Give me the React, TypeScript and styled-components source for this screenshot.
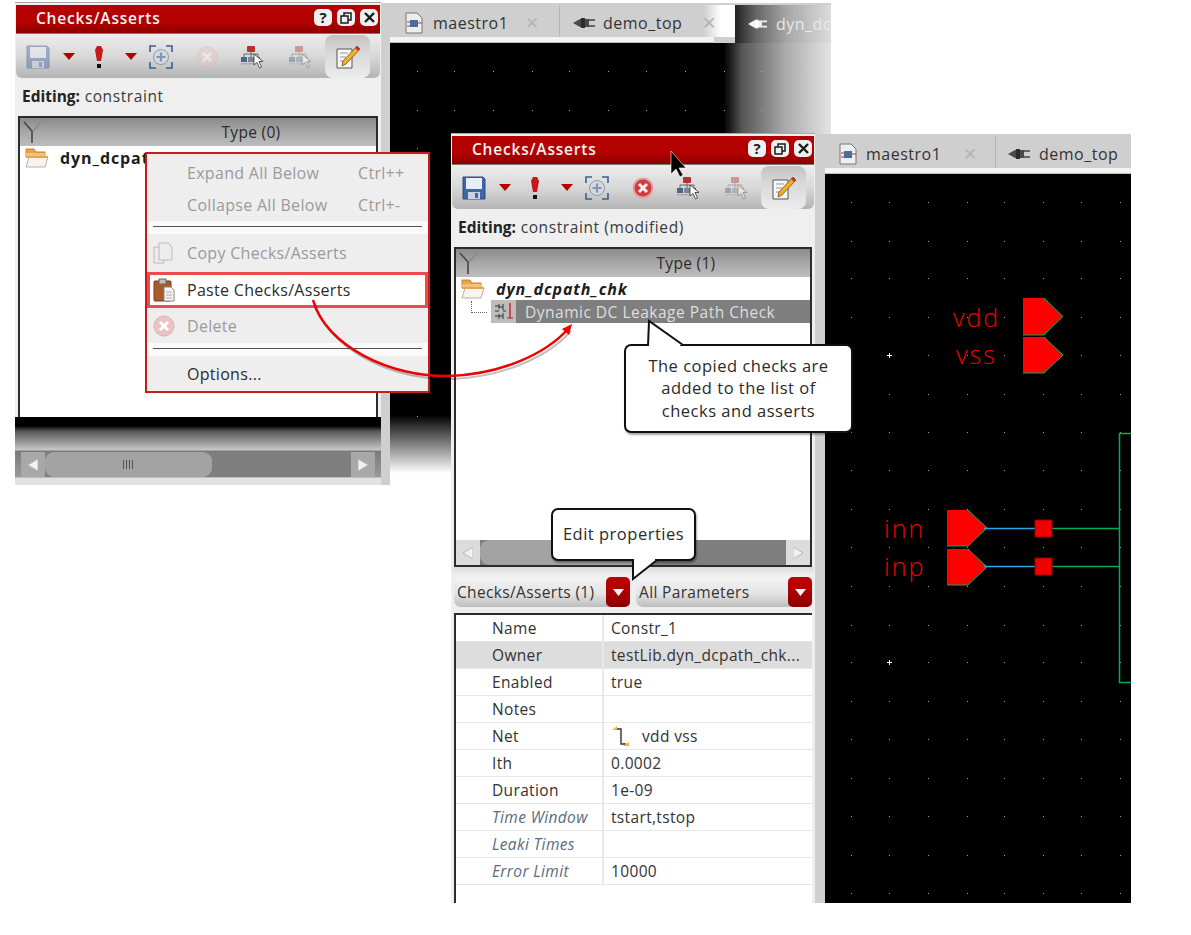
import React from 'react';
import styled, { createGlobalStyle } from 'styled-components';

const GlobalStyle = createGlobalStyle`
  html, body { margin: 0; padding: 0; background: #fff; }
  body { font-family: "Open Sans", "Noto Sans", sans-serif; color: #2a2a2a; }
`;

const dither = (a: string, b: string) => `repeating-conic-gradient(${a} 0 25%, ${b} 0 50%) 0 0 / 2px 2px`;

const Page = styled.div`
  position: relative;
  width: 1191px;
  height: 935px;
  overflow: hidden;
  background: #fff;
`;

/* windows on the desktop */
const Panel = styled.section<{ $left: number; $top: number; $width: number; $height: number }>`
  position: absolute;
  left: ${({ $left }) => $left}px;
  top: ${({ $top }) => $top}px;
  width: ${({ $width }) => $width}px;
  height: ${({ $height }) => $height}px;
  box-sizing: border-box;
  display: flex;
  flex-direction: column;
  padding: 2px 1px 0;
  background: ${dither('#ececec', '#f2f2f2')};
  border-top: 1px solid #a8a8a8;
`;

const Workspace = styled.section<{ $left: number; $top: number; $width: number; $height: number; $inset: number }>`
  position: absolute;
  left: ${({ $left }) => $left}px;
  top: ${({ $top }) => $top}px;
  width: ${({ $width }) => $width}px;
  height: ${({ $height }) => $height}px;
  box-sizing: border-box;
  display: flex;
  flex-direction: column;
  padding: 2px 0 0 ${({ $inset }) => $inset}px;
  background: #cfcfcf;
  overflow: hidden;
`;

const TabBar = styled.div<{ $shift: number }>`
  display: flex;
  height: 32px;
  flex: none;
  margin-left: ${({ $shift }) => $shift}px;
`;

const Tab = styled.div<{ $width: number; $pad: number; $kind?: 'fade' | 'active' }>`
  flex: none;
  box-sizing: border-box;
  width: ${({ $width }) => $width}px;
  height: ${({ $kind }) => ($kind === 'active' ? 38 : 32)}px;
  display: flex;
  align-items: center;
  padding: ${({ $kind }) => ($kind === 'active' ? 0 : 3)}px 0 0 ${({ $pad }) => $pad}px;
  font-size: 16px;
  letter-spacing: 0.5px;
  color: ${({ $kind }) => ($kind === 'active' ? '#e8e8e8' : '#333')};
  white-space: nowrap;
  overflow: hidden;
  border-right: ${({ $kind }) => ($kind ? 'none' : '1px solid #b5b5b5')};
  background: ${({ $kind }) =>
    $kind === 'fade'
      ? 'linear-gradient(to right, #cfcfcf 0, #cfcfcf 82%, #fff 92%)'
      : $kind === 'active'
        ? 'linear-gradient(to right, #222 0, #666 22%, #a8a8a8 55%, #dcdcdc 100%)'
        : '#cfcfcf'};
`;

const TabLabel = styled.span<{ $gap: number; $width?: number }>`
  flex: none;
  margin-left: ${({ $gap }) => $gap}px;
  width: ${({ $width }) => ($width ? `${$width}px` : 'auto')};
`;

const TabClose = styled.span`
  color: #b4b4b4;
  font-size: 17px;
`;

const TabStrip = styled.div<{ $width?: number }>`
  flex: none;
  height: 6px;
  background: #f3f3f3;
  border-bottom: 1px solid #bcbcbc;
  box-sizing: border-box;
  width: ${({ $width }) => ($width ? `${$width}px` : 'auto')};
`;

const Canvas = styled.div<{ $faded?: boolean }>`
  flex: 1;
  min-height: 0;
  background: ${({ $faded }) =>
    $faded
      ? `linear-gradient(to bottom, transparent 0, transparent 372px, #fff 430px),
         linear-gradient(to right, #000 0, #000 334px, #555 352px, #aaa 395px, #e4e4e4 100%)`
      : '#000'};
  svg { display: block; }
`;

/* checks panel parts */
const TitleBar = styled.header`
  flex: none;
  height: 29px;
  box-sizing: border-box;
  display: flex;
  align-items: center;
  padding: 0 2px 3px 20px;
  background: linear-gradient(to bottom, #b30000 0, #b30000 60%, #8e0000 100%);
  border-bottom: 1px solid #777;
`;

const TitleText = styled.h2`
  flex: 1;
  margin: 0;
  font-size: 15.5px;
  font-weight: 600;
  letter-spacing: 0.8px;
  color: #f4f4f4;
`;

const WinButtons = styled.div`
  display: flex;
  gap: 5px;
`;

const WinButton = styled.span`
  width: 18px;
  height: 17px;
  display: flex;
  align-items: center;
  justify-content: center;
  background: #f0f0f0;
  border-radius: 5px;
  color: #1b1b1b;
  font-size: 15px;
  font-weight: 700;
  line-height: 1;
`;

const Toolbar = styled.div`
  flex: none;
  margin-top: 1px;
  height: 43px;
  display: flex;
  align-items: center;
  padding-left: 10px;
  border-radius: 0 0 6px 6px;
  background: linear-gradient(to bottom, #ececec 0, #d8d8d8 50%, #b4b4b4 100%);
`;

const ToolSlot = styled.span<{ $gap?: number; $width: number; $dim?: boolean }>`
  flex: none;
  display: flex;
  justify-content: center;
  margin-left: ${({ $gap }) => $gap ?? 0}px;
  width: ${({ $width }) => $width}px;
  opacity: ${({ $dim }) => ($dim ? 0.42 : 1)};
`;

const ToolActive = styled.span`
  flex: none;
  margin-left: 12px;
  width: 45px;
  height: 43px;
  display: flex;
  align-items: center;
  justify-content: center;
  border-radius: 8px;
  background: linear-gradient(to bottom, #c2c2c2 0, #d6d6d6 35%, #ececec 100%);
`;

const EditingLine = styled.div`
  flex: none;
  height: 38px;
  box-sizing: border-box;
  padding: 7px 0 0 6px;
  font-size: 15.5px;
  line-height: 22px;
  letter-spacing: 0.6px;
  color: #3a3a3a;
  b { font-weight: 700; color: #222; letter-spacing: 0; }
`;

const TreeBox = styled.div<{ $height: number }>`
  flex: none;
  box-sizing: border-box;
  height: ${({ $height }) => $height}px;
  margin: 0 2px;
  display: flex;
  flex-direction: column;
  border: 2px solid #2c2c2c;
  border-bottom-width: ${({ $height }) => ($height > 310 ? 2 : 0)}px;
  background: #fff;
`;

const TreeHead = styled.div`
  flex: none;
  height: 28px;
  position: relative;
  display: flex;
  align-items: center;
  justify-content: center;
  padding-left: 106px;
  font-size: 15.5px;
  letter-spacing: 0.3px;
  color: #2c2c2c;
  background: linear-gradient(to bottom, #8b8b8b 0, #aaaaaa 55%, #bdbdbd 100%);
  svg { position: absolute; left: 3px; top: 3px; }
`;

const TreeBody = styled.div`
  flex: 1;
  min-height: 0;
`;

const TreeRow = styled.div`
  height: 23px;
  display: flex;
  align-items: center;
  padding-left: 5px;
`;

const GroupName = styled.span<{ $italic?: boolean }>`
  margin-left: 11px;
  font-size: 16px;
  font-weight: 700;
  font-style: ${({ $italic }) => ($italic ? 'italic' : 'normal')};
  letter-spacing: 0.9px;
  color: #1d1d1d;
  white-space: nowrap;
`;

const CheckRow = styled.div`
  height: 23px;
  display: flex;
  align-items: stretch;
  padding-left: 9px;
  background: #fff;
`;

const TreeLine = styled.span`
  width: 15px;
  height: 11px;
  margin: 1px 0 0 6px;
  border-left: 1px dotted #666;
  border-bottom: 1px dotted #666;
`;

const CheckGlyph = styled.span`
  width: 25px;
  margin-left: 4px;
  display: flex;
  align-items: center;
  justify-content: center;
  background: #bdbdbd;
`;

const CheckName = styled.span`
  flex: 1;
  display: flex;
  align-items: center;
  padding-left: 9px;
  background: #7f7f7f;
  color: #dedede;
  font-size: 15.5px;
  letter-spacing: 0.5px;
  white-space: nowrap;
`;

const ScrollBar = styled.div<{ $margin?: string }>`
  flex: none;
  height: 25px;
  margin: ${({ $margin }) => $margin ?? 0};
  display: flex;
  background: #7e7e7e;
`;

const ScrollEnd = styled.span<{ $dark?: boolean }>`
  flex: none;
  width: 24px;
  display: flex;
  align-items: center;
  justify-content: center;
  background: ${({ $dark }) => ($dark ? '#a8a8a8' : '#dcdcdc')};
`;

const ScrollThumb = styled.span<{ $width: number }>`
  flex: none;
  width: ${({ $width }) => $width}px;
  display: flex;
  align-items: center;
  justify-content: center;
  border-radius: 9px;
  background: #a3a3a3;
`;

const ScrollTrack = styled.span`
  flex: 1;
`;

const Grip = styled.span`
  width: 12px;
  height: 9px;
  background: repeating-linear-gradient(to right, #555 0, #555 1px, transparent 1px, transparent 3px);
`;

const FadeFooter = styled.div`
  flex: 1;
  margin: 0 -1px;
  padding-top: 35px;
  box-sizing: border-box;
  background: linear-gradient(to bottom, #000 0, #000 9px, #555 14px, #c8c8c8 33px, #7a7a7a 34px, #9a9a9a 60px, #e2e2e2 61px);
`;

const ComboRow = styled.div`
  flex: none;
  height: 46px;
  box-sizing: border-box;
  padding: 10px 2px 0;
  display: flex;
  gap: 6px;
  background: linear-gradient(to bottom, #dcdcdc 0, #eeeeee 8px);
`;

const Combo = styled.div`
  flex: 1;
  height: 30px;
  display: flex;
  align-items: center;
  padding-left: 3px;
  border-radius: 7px;
  font-size: 15.5px;
  letter-spacing: 0.35px;
  color: #333;
  background: linear-gradient(to bottom, #f3f3f3 0, #e4e4e4 55%, #bdbdbd 100%);
`;

const ComboText = styled.span`
  flex: 1;
  white-space: nowrap;
`;

const ComboDrop = styled.span`
  flex: none;
  width: 24px;
  height: 30px;
  display: flex;
  align-items: center;
  justify-content: center;
  border-radius: 5px;
  background: linear-gradient(to bottom, #c00000 0, #a80000 60%, #8a0000 100%);
`;

const PropTable = styled.div`
  flex: 1;
  margin: 0 2px;
  border-top: 2px solid #2c2c2c;
  border-left: 2px solid #2c2c2c;
  background: #fff;
`;

const PropRow = styled.div<{ $shade?: boolean }>`
  height: 27px;
  box-sizing: border-box;
  display: grid;
  grid-template-columns: 148px 1fr;
  align-items: center;
  border-bottom: 1px solid #e6e6e6;
  font-size: 15.5px;
  letter-spacing: 0.35px;
  background: ${({ $shade }) => ($shade ? dither('#d8d8d8', '#e2e2e2') : '#fff')};
`;

const PropName = styled.span<{ $soft?: boolean }>`
  height: 100%;
  display: flex;
  align-items: center;
  padding-left: 36px;
  border-right: 2px solid #e9e9e9;
  white-space: nowrap;
  font-style: ${({ $soft }) => ($soft ? 'italic' : 'normal')};
  color: ${({ $soft }) => ($soft ? '#5b6b82' : '#333')};
`;

const PropValue = styled.span`
  display: flex;
  align-items: center;
  padding-left: 7px;
  white-space: nowrap;
  color: #333;
`;

const NetText = styled.span`
  margin-left: 11px;
`;

/* overlays */
const ContextMenu = styled.div`
  position: absolute;
  left: 145px;
  top: 152px;
  width: 285px;
  height: 241px;
  box-sizing: border-box;
  padding-top: 2px;
  border: 2px solid #cc1a1a;
  background: ${dither('#ebebeb', '#f1f1f1')};
`;

const MenuRow = styled.div<{ $height: number; $on?: boolean }>`
  height: ${({ $height }) => $height}px;
  box-sizing: border-box;
  display: flex;
  align-items: center;
  font-size: 16px;
  letter-spacing: 0.3px;
  color: ${({ $on }) => ($on ? '#2c2c2c' : '#9a9a9a')};
`;

const PasteRow = styled(MenuRow)`
  margin: 1px 0;
  color: #2c2c2c;
  background: #fff;
  border: 3px solid #e94c4c;
`;

const MenuIcon = styled.span<{ $pasted?: boolean }>`
  flex: none;
  width: ${({ $pasted }) => ($pasted ? 37 : 40)}px;
  padding-left: ${({ $pasted }) => ($pasted ? 3 : 6)}px;
  box-sizing: border-box;
  display: flex;
  align-items: center;
`;

const MenuText = styled.span`
  flex: none;
  width: 171px;
  white-space: nowrap;
`;

const MenuKeys = styled.span`
  color: #9a9a9a;
`;

const MenuRule = styled.div`
  height: 13px;
  box-sizing: border-box;
  padding: 5px 6px 0;
  background: #fafafa;
  &::after {
    content: '';
    display: block;
    height: 1px;
    background: #555;
  }
`;

const Callout = styled.div<{ $left: number; $top: number; $width: number; $height: number }>`
  position: absolute;
  left: ${({ $left }) => $left}px;
  top: ${({ $top }) => $top}px;
  width: ${({ $width }) => $width}px;
  height: ${({ $height }) => $height}px;
  box-sizing: border-box;
  display: flex;
  align-items: center;
  justify-content: center;
  text-align: center;
  border: 2px solid #111;
  border-radius: 7px;
  background: #fff;
  box-shadow: 1px 2px 2px rgba(0, 0, 0, 0.35);
  font-size: 16.5px;
  line-height: 22.5px;
  letter-spacing: 0.5px;
  color: #2a2a2a;
`;

const Pointer = styled.svg<{ $left: number; $top: number }>`
  position: absolute;
  left: ${({ $left }) => $left}px;
  top: ${({ $top }) => $top}px;
`;

const Overlay = styled.svg`
  position: absolute;
  left: 0;
  top: 0;
  pointer-events: none;
`;

const Cursor = styled.svg<{ $left: number; $top: number }>`
  position: absolute;
  left: ${({ $left }) => $left}px;
  top: ${({ $top }) => $top}px;
`;

const Floppy = () => (
  <svg width="24" height="24" viewBox="0 0 24 24">
    <path d="M1 1h20l2 2v20H1z" fill="#3f66a8" stroke="#2c4a80" />
    <rect x="4" y="2" width="16" height="11" fill="#e8eef6" />
    <rect x="6" y="16" width="12" height="7" fill="#c7d2e2" />
    <rect x="13" y="17" width="3" height="5" fill="#3f66a8" />
  </svg>
);

const DownArrow = () => (
  <svg width="12" height="7" viewBox="0 0 12 7">
    <path d="M0 0h12L6 7z" fill="#b00000" />
  </svg>
);

const Exclaim = () => (
  <svg width="8" height="22" viewBox="0 0 8 22">
    <path d="M2 0h4l2 4-2 11H2L0 4z" fill="#c81818" />
    <rect x="2" y="18" width="4" height="4" fill="#111" />
  </svg>
);

const FitIcon = () => (
  <svg width="24" height="24" viewBox="0 0 24 24" fill="none">
    <path d="M1 7V1h6M17 1h6v6M23 17v6h-6M7 23H1v-6" stroke="#3c5f8c" strokeWidth="1.6" />
    <circle cx="12" cy="12" r="7.500" fill="#d4d9df" stroke="#8a9cb2" />
    <path d="M12 7.500v9M7.500 12h9" stroke="#7f97b5" strokeWidth="2.2" />
  </svg>
);

const StopIcon = () => (
  <svg width="22" height="22" viewBox="0 0 22 22">
    <circle cx="11" cy="11" r="10.500" fill="#e3a0a0" />
    <circle cx="11" cy="11" r="8.500" fill="#d03c3c" />
    <path d="M7 7l8 8M15 7l-8 8" stroke="#f6eeee" strokeWidth="3" />
  </svg>
);

const HierIcon = () => (
  <svg width="24" height="24" viewBox="0 0 24 24">
    <path d="M10 6v3M3 12V9h14v3M10 9v3" stroke="#666" fill="none" />
    <rect x="6" y="1" width="8" height="6" rx="1" fill="#b5302e" />
    <rect x="0" y="12" width="6" height="5" fill="#4d6688" />
    <rect x="7" y="12" width="6" height="5" fill="#7b8696" />
    <rect x="14" y="12" width="5" height="5" fill="#4d6688" />
    <rect x="0" y="18" width="13" height="1.500" fill="#aaa" />
    <path d="M13 9l0 11 3-2.500 2.500 5.500 2-1-2.500-5.500h4z" fill="#fff" stroke="#333" strokeWidth="0.8" />
  </svg>
);

const EditIcon = () => (
  <svg width="24" height="24" viewBox="0 0 24 24">
    <path d="M1 4h15v19H1z" fill="#f6f6f6" stroke="#555" />
    <path d="M4 8h8M4 12h6M4 16h5" stroke="#999" />
    <path d="M21 1l3 3L10 19l-4 2 1-5z" fill="#e8b22a" stroke="#7a4d10" strokeWidth="0.8" />
    <path d="M21 1l3 3-2 2-3-3z" fill="#c8332d" />
  </svg>
);

const Folder = () => (
  <svg width="24" height="22" viewBox="0 0 24 22">
    <path d="M1 2h8l2 3h9v5H1z" fill="#e9a24d" stroke="#c98433" />
    <path d="M1 6h19v5H1z" fill="#f3c17f" />
    <path d="M1 20l3-10h19l-3 10z" fill="#f7f4ee" stroke="#b9b0a2" />
    <path d="M1 10h22" stroke="#e5a356" strokeWidth="2" />
  </svg>
);

const FilterY = () => (
  <svg width="20" height="22" viewBox="0 0 20 22" fill="none">
    <path d="M1 1l8 9v12" stroke="#4f4538" strokeWidth="1.6" />
    <path d="M18 1l-8 9" stroke="#8a8a8a" strokeWidth="1.6" />
  </svg>
);

const CheckGlyphIcon = () => (
  <svg width="20" height="20" viewBox="0 0 20 20" fill="none">
    <path d="M1 4h4M1 9h4M1 14h4M5 2v5M5 12v5M9 2v6M9 11v6M5 5h4M5 14h4M9 9h3" stroke="#333" />
    <path d="M16 1v15" stroke="#c81e1e" strokeWidth="1.4" />
    <path d="M13 16h6" stroke="#c81e1e" />
  </svg>
);

const PageIcon = () => (
  <svg width="18" height="22" viewBox="0 0 18 22">
    <path d="M1 1h11l5 5v15H1z" fill="#eeeeee" stroke="#777" />
    <rect x="5" y="8" width="8" height="7" fill="#4b6c9e" />
    <path d="M2 10h3M2 14h3M13 11h4" stroke="#c8332d" />
  </svg>
);

const PlugIcon = ({ light }: { light?: boolean }) => (
  <svg width="23" height="14" viewBox="0 0 23 14">
    <path d="M0 7l7-4h9v8H7z" fill={light ? '#f2f2f2' : '#4a4a4a'} />
    <path d="M16 4h6M16 10h6" stroke={light ? '#f2f2f2' : '#666'} strokeWidth="2" />
    <path d="M8 2h4v10H8z" fill={light ? '#fff' : '#2c2c2c'} />
  </svg>
);

const CopyIcon = () => (
  <svg width="20" height="22" viewBox="0 0 20 22" fill="#ececec" stroke="#bbb">
    <path d="M1 5h10v16H1z" />
    <path d="M6 1h9l4 4v13H6z" />
  </svg>
);

const PasteIcon = () => (
  <svg width="22" height="24" viewBox="0 0 22 24">
    <rect x="1" y="3" width="17" height="20" rx="1" fill="#a85a2a" stroke="#6e3a18" />
    <rect x="6" y="1" width="7" height="5" fill="#bdbdbd" stroke="#666" />
    <path d="M11 9h7l3 3v11H11z" fill="#f5f5f5" stroke="#888" />
    <path d="M13 14h6M13 17h6M13 20h6" stroke="#aaa" />
  </svg>
);

const DimStop = () => (
  <svg width="22" height="22" viewBox="0 0 22 22">
    <circle cx="11" cy="11" r="10" fill="#eac4c4" stroke="#ddb0b0" />
    <path d="M7 7l8 8M15 7l-8 8" stroke="#fff" strokeWidth="3" />
  </svg>
);

const NetIcon = () => (
  <svg width="20" height="22" viewBox="0 0 20 22" fill="none">
    <path d="M5 4h5v15h5" stroke="#333" strokeWidth="1.4" />
    <path d="M1 5l5-4v4z" fill="#e6c21e" />
    <path d="M12 21l6-4v4z" fill="#e6c21e" />
  </svg>
);

const LeftTip = () => (
  <svg width="10" height="12" viewBox="0 0 10 12"><path d="M10 0v12L0 6z" fill="#f2f2f2" stroke="#bbb" /></svg>
);
const RightTip = () => (
  <svg width="10" height="12" viewBox="0 0 10 12"><path d="M0 0v12l10-6z" fill="#f2f2f2" stroke="#bbb" /></svg>
);
const DropTip = () => (
  <svg width="11" height="7" viewBox="0 0 11 7"><path d="M0 0h11L5.500 7z" fill="#f4f4f4" /></svg>
);

const PanelTop = () => (
  <TitleBar>
    <TitleText>Checks/Asserts</TitleText>
    <WinButtons>
      <WinButton>?</WinButton>
      <WinButton>
        <svg width="12" height="12" viewBox="0 0 12 12" fill="none" stroke="#1b1b1b" strokeWidth="1.5">
          <rect x="4" y="1" width="7" height="7" />
          <rect x="1" y="4" width="7" height="7" fill="#f0f0f0" />
        </svg>
      </WinButton>
      <WinButton>
        <svg width="11" height="11" viewBox="0 0 11 11" stroke="#1b1b1b" strokeWidth="2.4">
          <path d="M1 1l9 9M10 1l-9 9" />
        </svg>
      </WinButton>
    </WinButtons>
  </TitleBar>
);

const PanelTools = ({ saved }: { saved: boolean }) => (
  <Toolbar>
    <ToolSlot $width={24} $dim={saved}><Floppy /></ToolSlot>
    <ToolSlot $width={12} $gap={13}><DownArrow /></ToolSlot>
    <ToolSlot $width={8} $gap={20}><Exclaim /></ToolSlot>
    <ToolSlot $width={12} $gap={22}><DownArrow /></ToolSlot>
    <ToolSlot $width={24} $gap={12}><FitIcon /></ToolSlot>
    <ToolSlot $width={22} $gap={23} $dim={saved}>{saved ? <DimStop /> : <StopIcon />}</ToolSlot>
    <ToolSlot $width={24} $gap={23}><HierIcon /></ToolSlot>
    <ToolSlot $width={24} $gap={24} $dim><HierIcon /></ToolSlot>
    <ToolActive><EditIcon /></ToolActive>
  </Toolbar>
);

const range = (items: number[], along: number[]) =>
  items.flatMap((x) => along.map((y) => ({ x, y })));

const backDots = [
  ...range([417, 454, 493, 532, 569, 608, 646, 685, 724, 761, 800], [71, 110]),
  ...range([417], [148, 187, 225, 264, 303, 341, 380, 416, 455]),
];

const frontDots = range(
  [851, 889, 928, 967, 1004, 1043, 1081, 1120],
  [202, 241, 278, 317, 355, 394, 432, 470, 509, 547, 586, 625, 662, 701, 739, 778, 816, 855, 893],
);

const PinShape = ({ x, y, h }: { x: number; y: number; h: number }) => (
  <>
    <path d={`M${x} ${y}h21l19 ${h / 2}-19 ${h / 2}h-21z`} fill="#ff0000" />
    <path d={`M${x + 21} ${y}l19 ${h / 2}-19 ${h / 2}h-21`} fill="none" stroke="#00b050" strokeWidth="1" />
  </>
);

const SchematicLabel = styled.text`
  font-family: "Open Sans", "Noto Sans", sans-serif;
  font-weight: 300;
  font-size: 25px;
  letter-spacing: 2px;
  fill: #f00000;
`;

const properties = [
  { name: 'Name', value: 'Constr_1' },
  { name: 'Owner', value: 'testLib.dyn_dcpath_chk...', shade: true },
  { name: 'Enabled', value: 'true' },
  { name: 'Notes', value: '' },
  { name: 'Net', value: 'vdd vss', net: true },
  { name: 'Ith', value: '0.0002' },
  { name: 'Duration', value: '1e-09' },
  { name: 'Time Window', value: 'tstart,tstop', soft: true },
  { name: 'Leaki Times', value: '', soft: true },
  { name: 'Error Limit', value: '10000', soft: true },
];

const App: React.FC = () => (
  <Page>
    <GlobalStyle />

    <Workspace $left={381} $top={3} $width={450} $height={482} $inset={9}>
      <TabBar $shift={1}>
        <Tab $width={169} $pad={14}>
          <PageIcon />
          <TabLabel $gap={10} $width={92}>maestro1</TabLabel>
          <TabClose>✕</TabClose>
        </Tab>
        <Tab $width={175} $pad={13} $kind="fade">
          <PlugIcon />
          <TabLabel $gap={7} $width={99}>demo_top</TabLabel>
          <TabClose>✕</TabClose>
        </Tab>
        <Tab $width={96} $pad={13} $kind="active">
          <PlugIcon light />
          <TabLabel $gap={8}>dyn_dc</TabLabel>
        </Tab>
      </TabBar>
      <TabStrip $width={324} />
      <Canvas $faded>
        <svg width="441" height="442" viewBox="390 43 441 442">
          {backDots.map((d) => (
            <rect key={`${d.x}-${d.y}`} x={d.x} y={d.y} width="1" height="1" fill="#a8a8a8" />
          ))}
        </svg>
      </Canvas>
    </Workspace>

    <Panel $left={15} $top={2} $width={366} $height={483}>
      <PanelTop />
      <PanelTools saved />
      <EditingLine><b>Editing:</b> constraint</EditingLine>
      <TreeBox $height={301}>
        <TreeHead><FilterY />Type (0)</TreeHead>
        <TreeBody>
          <TreeRow>
            <Folder />
            <GroupName>dyn_dcpath_chk</GroupName>
          </TreeRow>
        </TreeBody>
      </TreeBox>
      <FadeFooter>
        <ScrollBar $margin="0 6px">
          <ScrollEnd $dark><LeftTip /></ScrollEnd>
          <ScrollThumb $width={167}><Grip /></ScrollThumb>
          <ScrollTrack />
          <ScrollEnd $dark><RightTip /></ScrollEnd>
        </ScrollBar>
      </FadeFooter>
    </Panel>

    <Workspace $left={815} $top={134} $width={316} $height={769} $inset={10}>
      <TabBar $shift={2}>
        <Tab $width={169} $pad={12}>
          <PageIcon />
          <TabLabel $gap={9} $width={97}>maestro1</TabLabel>
          <TabClose>✕</TabClose>
        </Tab>
        <Tab $width={140} $pad={12}>
          <PlugIcon />
          <TabLabel $gap={8}>demo_top</TabLabel>
        </Tab>
      </TabBar>
      <TabStrip />
      <Canvas>
        <svg width="306" height="729" viewBox="825 174 306 729">
          {frontDots.map((d) => (
            <rect key={`${d.x}-${d.y}`} x={d.x} y={d.y} width="1" height="1" fill="#a0a0a0" />
          ))}
          <path d="M887 355.500h5M889.500 353v5M887 662.500h5M889.500 660v5" stroke="#fff" />
          <SchematicLabel x="953" y="327">vdd</SchematicLabel>
          <SchematicLabel x="956" y="364">vss</SchematicLabel>
          <SchematicLabel x="884" y="538">inn</SchematicLabel>
          <SchematicLabel x="884" y="576">inp</SchematicLabel>
          <PinShape x={1023} y={298} h={37} />
          <PinShape x={1023} y={337} h={36} />
          <PinShape x={947} y={510} h={36} />
          <PinShape x={947} y={549} h={36} />
          <path d="M984 528.500h51M984 566.500h51" stroke="#2aa5e8" strokeWidth="1.5" />
          <path d="M1052 528.500h68M1052 566.500h68M1131 433.500h-11.500v249h11.500" fill="none" stroke="#00b050" strokeWidth="1.5" />
          <rect x="1035" y="520" width="17" height="17" fill="#f00000" stroke="#a00000" />
          <rect x="1035" y="558" width="17" height="17" fill="#f00000" stroke="#a00000" />
        </svg>
      </Canvas>
    </Workspace>

    <Panel $left={451} $top={133} $width={364} $height={770}>
      <PanelTop />
      <PanelTools saved={false} />
      <EditingLine><b>Editing:</b> constraint (modified)</EditingLine>
      <TreeBox $height={320}>
        <TreeHead><FilterY />Type (1)</TreeHead>
        <TreeBody>
          <TreeRow>
            <Folder />
            <GroupName $italic>dyn_dcpath_chk</GroupName>
          </TreeRow>
          <CheckRow>
            <TreeLine />
            <CheckGlyph><CheckGlyphIcon /></CheckGlyph>
            <CheckName>Dynamic DC Leakage Path Check</CheckName>
          </CheckRow>
        </TreeBody>
        <ScrollBar>
          <ScrollEnd><LeftTip /></ScrollEnd>
          <ScrollThumb $width={165}><Grip /></ScrollThumb>
          <ScrollTrack />
          <ScrollEnd><RightTip /></ScrollEnd>
        </ScrollBar>
      </TreeBox>
      <ComboRow>
        <Combo>
          <ComboText>Checks/Asserts (1)</ComboText>
          <ComboDrop><DropTip /></ComboDrop>
        </Combo>
        <Combo>
          <ComboText>All Parameters</ComboText>
          <ComboDrop><DropTip /></ComboDrop>
        </Combo>
      </ComboRow>
      <PropTable>
        {properties.map((p) => (
          <PropRow key={p.name} $shade={p.shade}>
            <PropName $soft={p.soft}>{p.name}</PropName>
            <PropValue>
              {p.net && <NetIcon />}
              {p.net ? <NetText>{p.value}</NetText> : p.value}
            </PropValue>
          </PropRow>
        ))}
      </PropTable>
    </Panel>

    <Cursor $left={147} $top={181} width="16" height="28" viewBox="0 0 16 28">
      <path d="M1 1v22l5-5 4 7 3-2-4-7h6z" fill="#000" />
    </Cursor>

    <ContextMenu>
      <MenuRow $height={33}><MenuIcon /><MenuText>Expand All Below</MenuText><MenuKeys>Ctrl++</MenuKeys></MenuRow>
      <MenuRow $height={32}><MenuIcon /><MenuText>Collapse All Below</MenuText><MenuKeys>Ctrl+-</MenuKeys></MenuRow>
      <MenuRule />
      <MenuRow $height={37}><MenuIcon><CopyIcon /></MenuIcon><MenuText>Copy Checks/Asserts</MenuText></MenuRow>
      <PasteRow $height={36} $on><MenuIcon $pasted><PasteIcon /></MenuIcon><MenuText>Paste Checks/Asserts</MenuText></PasteRow>
      <MenuRow $height={34}><MenuIcon><DimStop /></MenuIcon><MenuText>Delete</MenuText></MenuRow>
      <MenuRule />
      <MenuRow $height={35} $on><MenuIcon /><MenuText>Options...</MenuText></MenuRow>
    </ContextMenu>

    <Overlay width="1191" height="935" viewBox="0 0 1191 935" fill="none">
      <path d="M313 300C325 345 390 378 450 376C500 374 545 355 569 328" stroke="rgba(0,0,0,0.25)" strokeWidth="2" transform="translate(2 3)" />
      <path d="M313 300C325 345 390 378 450 376C500 374 545 355 569 328" stroke="#f00000" strokeWidth="2.500" />
      <path d="M572 324l-3 11-7-6z" fill="#f00000" />
    </Overlay>

    <Cursor $left={670} $top={150} width="18" height="30" viewBox="0 0 18 30">
      <path d="M1 1v23l5-5 4 8 3-2-4-7h7z" fill="#000" stroke="#fff" strokeWidth="0.6" />
    </Cursor>

    <Callout $left={624} $top={344} $width={229} $height={89}>
      The copied checks are<br />added to the list of<br />checks and asserts
    </Callout>
    <Pointer $left={643} $top={319} width="44" height="28" viewBox="0 0 44 28">
      <path d="M5 27L6 2L40 26" fill="#fff" stroke="#111" strokeWidth="2" />
      <path d="M7 25l30 0 0 3-30 0z" fill="#fff" />
    </Pointer>

    <Callout $left={551} $top={508} $width={145} $height={53}>
      Edit properties
    </Callout>
    <Pointer $left={630} $top={557} width="30" height="26" viewBox="0 0 30 26">
      <path d="M3 2L3 22L27 3" fill="#fff" stroke="#111" strokeWidth="2" />
      <path d="M5 0h20v3H5z" fill="#fff" />
    </Pointer>
  </Page>
);

export default App;
